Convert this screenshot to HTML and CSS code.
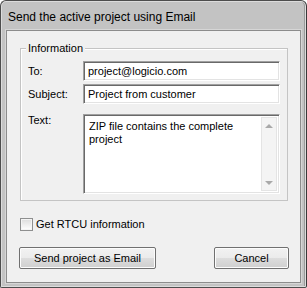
FILE: index.html
```html
<!DOCTYPE html>
<html>
<head>
<meta charset="utf-8">
<link rel="stylesheet" href="styles.css">
</head>
<body>
<div class="window">
  <div class="titlebar">Send the active project using Email</div>
  <div class="client">
    <div class="group">
      <span class="legend">Information</span>
      <div class="form">
        <label class="lbl">To:</label>
        <div class="field">project@logicio.com</div>
        <label class="lbl">Subject:</label>
        <div class="field">Project from customer</div>
        <label class="lbl lbl-top">Text:</label>
        <div class="memo">
          <div class="memo-text">ZIP file contains the complete project</div>
          <div class="scroll">
            <span class="arrow up"></span>
            <span class="arrow down"></span>
          </div>
        </div>
      </div>
    </div>
    <div class="check-row">
      <span class="checkbox"></span>
      <span class="check-label">Get RTCU information</span>
    </div>
    <div class="buttons">
      <div class="btn btn-send">Send project as Email</div>
      <div class="btn btn-cancel">Cancel</div>
    </div>
  </div>
</div>
</body>
</html>
```
FILE: styles.css
```css
* { box-sizing: border-box; }
html, body { margin: 0; padding: 0; background: #ffffff; }
body {
  font-family: "Liberation Sans", Arial, sans-serif;
  font-size: 11px;
  color: #000;
}
.window {
  width: 307px;
  height: 288px;
  border: 1px solid #4d4d4d;
  border-right-color: #3a3a3a;
  border-radius: 6px 6px 2px 2px;
  background: #c3c3c3;
  box-shadow: inset 0 0 0 1px #dcdcdc, inset -2px 0 0 #9a9a9a;
  display: flex;
  flex-direction: column;
  padding: 0 5px 4px 5px;
}
.titlebar {
  height: 29px;
  flex: none;
  padding: 9px 0 0 2px;
  font-size: 12px;
  line-height: 14px;
  color: #000;
}
.client {
  flex: 1;
  border: 1px solid #8c8c8c;
  box-shadow: 0 0 0 1px #d6d6d6;
  background: #f0f0f0;
  display: flex;
  flex-direction: column;
  padding: 17px 12px 0 13px;
}
.group {
  position: relative;
  height: 153px;
  border: 1px solid #c4c4c4;
  box-shadow: inset 1px 1px 0 #ffffff;
  padding: 12px 7px 6px 7px;
}
.legend {
  position: absolute;
  left: 5px;
  top: -8px;
  padding: 0 2px;
  background: #f0f0f0;
  line-height: 14px;
}
.form {
  display: grid;
  grid-template-columns: 55px 197px;
  grid-template-rows: 20px 20px 87px;
  row-gap: 3px;
}
.form .memo { margin-top: 7px; }
.lbl {
  display: flex;
  align-items: center;
  line-height: 13px;
}
.lbl-top {
  align-items: flex-start;
  margin-top: 7px;
}
.field, .memo {
  background: #ffffff;
  border-top: 1px solid #a0a0a0;
  border-left: 1px solid #a0a0a0;
  border-bottom: 1px solid #ffffff;
  border-right: 1px solid #ffffff;
  box-shadow: inset 1px 1px 0 #696969, inset -1px -1px 0 #e3e3e3;
}
.field {
  padding: 0 4px;
  line-height: 18px;
  white-space: nowrap;
  overflow: hidden;
}
.memo {
  display: flex;
  padding: 2px;
}
.memo-text {
  flex: 1;
  padding: 3px 20px 0 3px;
  line-height: 13px;
}
.scroll {
  width: 16px;
  flex: none;
  background: #f4f4f4;
  border: 1px solid #e4e4e4;
  display: flex;
  flex-direction: column;
  justify-content: space-between;
  align-items: center;
  padding: 6px 0 5px 0;
}
.arrow {
  width: 0;
  height: 0;
  border-left: 4px solid transparent;
  border-right: 4px solid transparent;
}
.arrow.up { border-bottom: 4px solid #a9a9a9; }
.arrow.down { border-top: 4px solid #a9a9a9; }
.check-row {
  display: flex;
  align-items: center;
  margin-top: 17px;
  padding-left: 0;
  height: 13px;
}
.checkbox {
  width: 13px;
  height: 13px;
  border: 1px solid #8e8f8f;
  background: linear-gradient(#dcdcdc, #ffffff);
  box-shadow: inset 0 0 0 1px #f4f4f4;
  flex: none;
}
.check-label {
  margin-left: 3px;
  line-height: 13px;
}
.buttons {
  display: flex;
  justify-content: space-between;
  margin-top: 16px;
  margin-left: -1px;
  margin-right: -1px;
}
.btn {
  height: 22px;
  border: 1px solid #707070;
  border-radius: 2px;
  background: linear-gradient(#f2f2f2 0%, #ebebeb 50%, #dddddd 51%, #cfcfcf 100%);
  box-shadow: inset 0 0 0 1px #fcfcfc;
  display: flex;
  align-items: center;
  justify-content: center;
  line-height: 13px;
}
.btn-send { width: 137px; }
.btn-cancel { width: 75px; }
```
